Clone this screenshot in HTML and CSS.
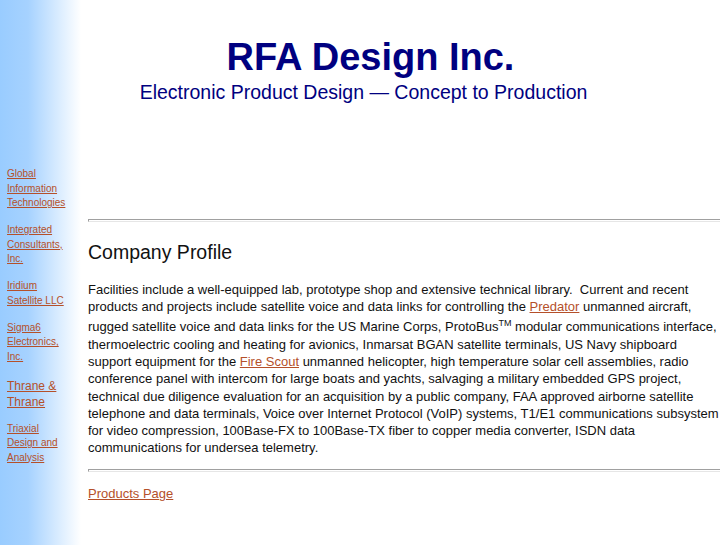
FILE: index.html
```html
<!DOCTYPE html>
<html lang="en">
<head>
<meta charset="utf-8">
<title>RFA Design Inc.</title>
<link rel="stylesheet" href="styles.css">
</head>
<body>
<div class="page">
  <nav class="sidebar">
    <p class="side-item"><a href="#">Global Information Technologies</a></p>
    <p class="side-item"><a href="#">Integrated Consultants, Inc.</a></p>
    <p class="side-item"><a href="#">Iridium Satellite LLC</a></p>
    <p class="side-item"><a href="#">Sigma6 Electronics, Inc.</a></p>
    <p class="side-item side-item-large"><a href="#">Thrane &amp; Thrane</a></p>
    <p class="side-item"><a href="#">Triaxial Design and Analysis</a></p>
  </nav>
  <main class="main">
    <header class="masthead">
      <h1 class="title">RFA Design Inc.</h1>
      <p class="tagline">Electronic Product Design — Concept to Production</p>
    </header>
    <hr class="rule rule-top">
    <h2 class="section-title">Company Profile</h2>
    <p class="profile">Facilities include a well-equipped lab, prototype shop and extensive technical library.&nbsp; Current and recent products and projects include satellite voice and data links for controlling the <a href="#">Predator</a> unmanned aircraft, rugged satellite voice and data links for the US Marine Corps, ProtoBus<sup class="tm">TM</sup> modular communications interface, thermoelectric cooling and heating for avionics, Inmarsat BGAN satellite terminals, US Navy shipboard support equipment for the <a href="#">Fire Scout</a> unmanned helicopter, high temperature solar cell assemblies, radio conference panel with intercom for large boats and yachts, salvaging a military embedded GPS project, technical due diligence evaluation for an acquisition by a public company, FAA approved airborne satellite telephone and data terminals, Voice over Internet Protocol (VoIP) systems, T1/E1 communications subsystem for video compression, 100Base-FX to 100Base-TX fiber to copper media converter, ISDN data communications for undersea telemetry.</p>
    <hr class="rule rule-bottom">
    <p class="footer-link"><a href="#">Products Page</a></p>
  </main>
</div>
</body>
</html>
```
FILE: styles.css
```css
html, body {
  margin: 0;
  padding: 0;
}
body {
  background: linear-gradient(to right, #99ccff 0, #a6d2ff 28px, #ffffff 81px);
  font-family: "Liberation Sans", Arial, Helvetica, sans-serif;
  color: #000;
  min-height: 100vh;
}
a {
  color: #b5502a;
  text-decoration: underline;
}
.page {
  display: flex;
  align-items: flex-start;
}
.sidebar {
  width: 64px;
  flex: none;
  padding: 167px 9px 0 7px;
}
.side-item {
  margin: 0 0 12.5px 0;
  font-size: 10px;
  line-height: 14.5px;
}
.side-item-large {
  font-size: 12px;
  line-height: 16px;
  margin-top: 13.5px;
  margin-bottom: 12px;
}
.main {
  flex: 1;
  margin: 0 7px 0 8px;
  min-width: 0;
}
.masthead {
  width: 560px;
  text-align: center;
  padding-top: 35px;
}
.title {
  margin: 0;
  font-size: 38px;
  font-weight: bold;
  color: #000080;
  line-height: 44px;
  padding-left: 5px;
}
.tagline {
  margin: 2px 0 0 0;
  font-size: 19.5px;
  line-height: 22px;
  color: #000080;
  padding-right: 9px;
}
.rule {
  border: 0;
  border-top: 1px solid #a0a0a0;
  border-bottom: 1px solid #e6e6e6;
  border-left: 1px solid #a0a0a0;
  height: 1px;
  margin: 0;
}
.rule-top {
  margin-top: 116px;
}
.section-title {
  margin: 19px 0 0 0;
  font-size: 19.5px;
  line-height: 22px;
  font-weight: normal;
  color: #111;
}
.profile {
  margin: 18px 0 0 0;
  font-size: 13px;
  line-height: 17.2px;
  color: #111;
}
.tm {
  font-size: 9px;
}
.rule-bottom {
  margin-top: 13px;
}
.footer-link {
  margin: 13px 0 0 0;
  font-size: 13px;
  line-height: 17px;
}
```
